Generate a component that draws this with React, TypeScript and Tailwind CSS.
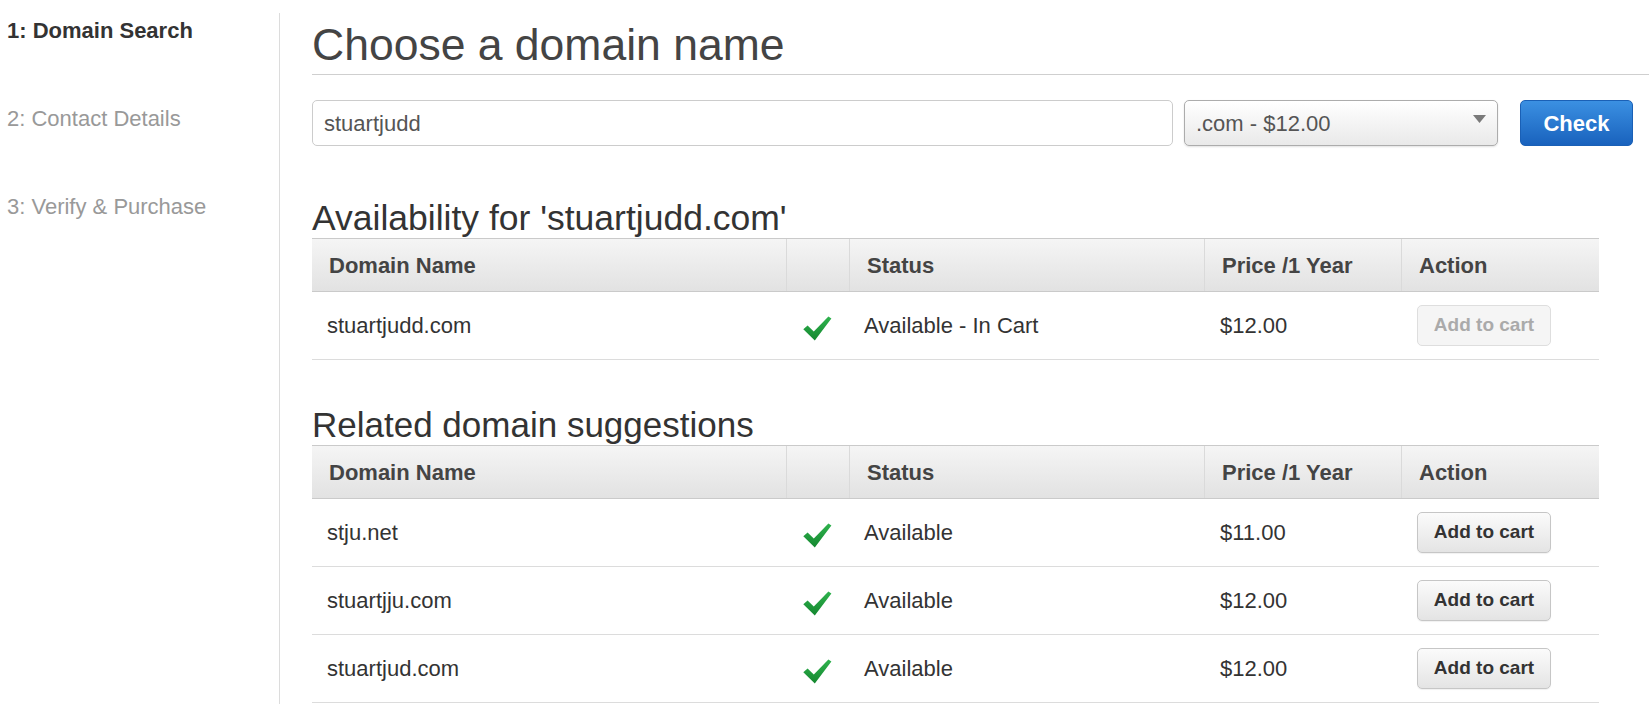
import type { ReactNode } from 'react';

const steps = [
  { label: '1: Domain Search', active: true },
  { label: '2: Contact Details', active: false },
  { label: '3: Verify & Purchase', active: false },
];

const suggestions = [
  { name: 'stju.net', status: 'Available', price: '$11.00' },
  { name: 'stuartjju.com', status: 'Available', price: '$12.00' },
  { name: 'stuartjud.com', status: 'Available', price: '$12.00' },
];

const cols = 'grid grid-cols-[474px_63px_355px_197px_198px]';

function CheckMark() {
  return (
    <svg width="29" height="25" viewBox="0 0 29 25" aria-hidden="true">
      <defs>
        <linearGradient id="chk" x1="0" y1="0" x2="0" y2="1">
          <stop offset="0" stopColor="#2fb34e" />
          <stop offset="1" stopColor="#14872f" />
        </linearGradient>
      </defs>
      <path d="M0.3 13.2 L4.6 9.6 L10.8 15.4 L25.4 0.4 L28.4 2.4 L11.8 24.4 Z" fill="url(#chk)" />
    </svg>
  );
}

function CartButton({ disabled = false }: { disabled?: boolean }) {
  return (
    <button
      type="button"
      disabled={disabled}
      className={
        disabled
          ? 'h-[41px] w-[134px] rounded-[5px] border border-[#dedede] bg-[#f5f5f5] text-[19px] font-bold text-[#aaa]'
          : 'h-[41px] w-[134px] rounded-[5px] border border-[#c6c6c6] bg-gradient-to-b from-[#fbfbfb] to-[#e4e4e4] text-[19px] font-bold text-[#333] shadow-[0_1px_1px_rgba(0,0,0,0.06)]'
      }
    >
      Add to cart
    </button>
  );
}

function HeaderRow() {
  return (
    <div className={`${cols} h-[54px] border-y border-[#cacaca] bg-gradient-to-b from-[#f5f5f5] to-[#e2e2e2] text-[22px] font-bold text-[#444]`}>
      <div className="flex items-center px-[17px]">Domain Name</div>
      <div className="border-l border-[#dadada]" />
      <div className="flex items-center border-l border-[#dadada] px-[17px]">Status</div>
      <div className="flex items-center border-l border-[#dadada] px-[17px]">Price /1 Year</div>
      <div className="flex items-center border-l border-[#dadada] px-[17px]">Action</div>
    </div>
  );
}

function Row({ name, status, price, action }: { name: string; status: string; price: string; action: ReactNode }) {
  return (
    <div className={`${cols} h-[68px] border-b border-[#dcdcdc] text-[22px] text-[#333]`}>
      <div className="flex items-center px-[15px]">{name}</div>
      <div className="flex items-center justify-center pt-[6px]">
        <CheckMark />
      </div>
      <div className="flex items-center px-[15px]">{status}</div>
      <div className="flex items-center px-[16px]">{price}</div>
      <div className="flex items-center px-[16px]">{action}</div>
    </div>
  );
}

export default function App() {
  return (
    <div className="flex min-h-screen bg-white font-['Liberation_Sans',Arial,sans-serif]">
      <aside className="flex w-[280px] shrink-0 pt-[13px]">
        <nav className="flex flex-1 flex-col gap-[62px] border-r border-[#dcdcdc] pl-[7px] pt-[5px]">
          {steps.map((step) => (
            <div
              key={step.label}
              className={
                step.active
                  ? 'text-[22px] font-bold leading-[26px] text-[#333]'
                  : 'text-[22px] leading-[26px] text-[#999]'
              }
            >
              {step.label}
            </div>
          ))}
        </nav>
      </aside>

      <main className="flex-1 pl-[32px]">
        <h1 className="mt-[19px] border-b border-[#cfcfcf] pb-[4px] text-[44.5px] leading-[51px] text-[#444]">
          Choose a domain name
        </h1>

        <div className="mt-[25px] flex gap-[11px] pr-[16px]">
          <div className="flex h-[46px] flex-1 items-center rounded-[5px] border border-[#cccccc] px-[11px] text-[22px] text-[#555]">
            stuartjudd
          </div>
          <div className="flex h-[46px] w-[314px] items-center justify-between rounded-[5px] border border-[#acacac] bg-gradient-to-b from-[#ffffff] to-[#e9e9e9] pl-[11px] pr-[11px] text-[22px] text-[#555] shadow-[0_1px_2px_rgba(0,0,0,0.12)]">
            <span>.com - $12.00</span>
            <svg width="13" height="8" viewBox="0 0 13 8" className="mb-[8px]" aria-hidden="true">
              <path d="M0 0 H13 L6.5 8 Z" fill="#7a7a7a" />
            </svg>
          </div>
          <button
            type="button"
            className="ml-[11px] h-[46px] w-[113px] rounded-[5px] border border-[#1a60b6] bg-gradient-to-b from-[#3b90e2] to-[#1962bd] text-[22px] font-bold text-white"
          >
            Check
          </button>
        </div>

        <div className="w-[1287px]">
          <h2 className="mt-[52px] text-[35.5px] leading-[40px] text-[#333]">
            Availability for 'stuartjudd.com'
          </h2>
          <HeaderRow />
          <Row name="stuartjudd.com" status="Available - In Cart" price="$12.00" action={<CartButton disabled />} />

          <h2 className="mt-[45px] text-[35px] leading-[40px] text-[#333]">Related domain suggestions</h2>
          <HeaderRow />
          {suggestions.map((s) => (
            <Row key={s.name} name={s.name} status={s.status} price={s.price} action={<CartButton />} />
          ))}
        </div>
      </main>
    </div>
  );
}
